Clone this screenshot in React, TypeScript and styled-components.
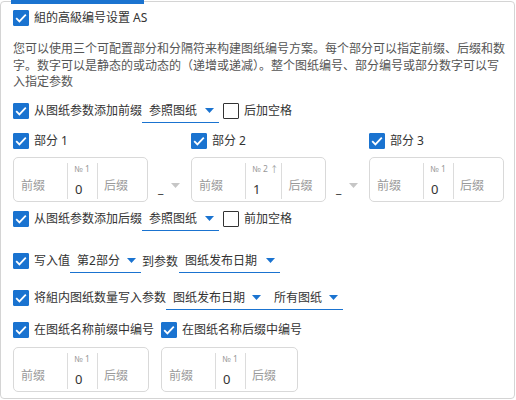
import React from "react";
import styled, { createGlobalStyle } from "styled-components";

const Global = createGlobalStyle`
  html, body { margin: 0; padding: 0; background: #fff; }
  body {
    font-family: "Noto Sans", "Noto Sans CJK SC", sans-serif;
    font-size: 12px;
    color: #333;
  }
  * { box-sizing: border-box; }
`;

const BLUE = "#1a73d0";

const Panel = styled.div`
  position: relative;
  width: 515px;
  height: 398px;
  margin-top: 1px;
  border: 1px solid #d4d4d4;
  border-radius: 4px;
  padding: 6px 11px 0 12px;
`;

const TabBar = styled.div`
  position: absolute;
  top: -2px;
  left: 10px;
  width: 133px;
  height: 4px;
  background: ${BLUE};
`;

const Row = styled.div<{ $mt: number; $h?: number }>`
  display: flex;
  align-items: center;
  height: ${(p) => p.$h ?? 24}px;
  margin-top: ${(p) => p.$mt}px;
  white-space: nowrap;
`;

const Box = styled.span<{ $on?: boolean }>`
  flex: none;
  width: 16px;
  height: 16px;
  border-radius: 1px;
  display: inline-flex;
  align-items: center;
  justify-content: center;
  background: ${(p) => (p.$on ? BLUE : "#fff")};
  border: 1px solid ${(p) => (p.$on ? BLUE : "#333")};
`;

const CheckLabel = styled.label`
  display: inline-flex;
  align-items: center;
  gap: 5px;
  color: #333;
  font-size: 12px;
  line-height: 16px;
`;

const Check = ({ on, children }: { on?: boolean; children: React.ReactNode }) => (
  <CheckLabel>
    <Box $on={on}>
      {on && (
        <svg width="14" height="14" viewBox="0 0 14 14">
          <path d="M2.2 7.2 L5.4 10.4 L11.8 3.6" fill="none" stroke="#fff" strokeWidth="1.8" />
        </svg>
      )}
    </Box>
    {children}
  </CheckLabel>
);

const Desc = styled.p`
  margin: 13px 0 0 0;
  color: #555;
  font-size: 12px;
  line-height: 16.5px;
  white-space: nowrap;
`;

const SelectBox = styled.div<{ $w: number; $pl?: number }>`
  display: inline-flex;
  align-items: center;
  justify-content: space-between;
  width: ${(p) => p.$w}px;
  height: 24px;
  padding: 0 5px 0 ${(p) => p.$pl ?? 7}px;
  border-bottom: 1px solid ${BLUE};
  color: #333;
`;

const Arrow = ({ color = BLUE }: { color?: string }) => (
  <svg width="9" height="5" viewBox="0 0 9 5">
    <path d="M0 0 H9 L4.5 5 Z" fill={color} />
  </svg>
);

const Select = ({ w, children, pl }: { w: number; children: React.ReactNode; pl?: number }) => (
  <SelectBox $w={w} $pl={pl}>
    <span>{children}</span>
    <Arrow />
  </SelectBox>
);

const Text = styled.span<{ $mx?: number }>`
  margin: 0 ${(p) => p.$mx ?? 0}px;
`;

const Parts = styled.div`
  display: grid;
  grid-template-columns: 135px 43px 135px 43px 135px;
  margin-top: 9px;
`;

const PartHead = styled.div`
  display: flex;
  align-items: center;
  height: 18px;
`;

const NumBox = styled.div<{ $w?: number }>`
  display: flex;
  width: ${(p) => p.$w ?? 135}px;
  height: 45px;
  border: 1px solid #d9d9d9;
  border-radius: 5px;
  margin-top: 7px;
`;

const Affix = styled.span<{ $w?: number; $pl: number }>`
  width: ${(p) => (p.$w ? `${p.$w}px` : "auto")};
  flex: ${(p) => (p.$w ? "none" : "1")};
  align-self: flex-end;
  padding: 0 0 7px ${(p) => p.$pl}px;
  color: #9a9a9a;
  font-size: 12px;
  line-height: 16px;
`;

const Divider = styled.span`
  width: 1px;
  margin: 5px 0 2px;
  background: #dcdcdc;
`;

const NumCell = styled.span`
  display: flex;
  flex-direction: column;
  min-width: 29px;
  padding: 5px 3px 0 6px;
`;

const NumLabel = styled.span`
  font-size: 8.5px;
  line-height: 11px;
  color: #999;
  white-space: nowrap;
`;

const NumValue = styled.span`
  margin-top: 7px;
  padding-left: 1px;
  font-size: 13px;
  line-height: 16px;
  color: #333;
`;

const Sep = styled.div`
  display: flex;
  align-items: flex-end;
  gap: 8px;
  padding: 0 0 6px 10px;
  margin-top: 25px;
  color: #333;
  font-size: 12px;
  line-height: 14px;
  svg { margin-bottom: 8px; }
`;

const Num = ({ label, value, w }: { label: string; value: string; w?: number }) => (
  <NumBox $w={w}>
    <Affix $w={53} $pl={7}>前缀</Affix>
    <Divider />
    <NumCell>
      <NumLabel>{label}</NumLabel>
      <NumValue>{value}</NumValue>
    </NumCell>
    <Divider />
    <Affix $pl={6}>后缀</Affix>
  </NumBox>
);

const Bottom = styled.div`
  display: flex;
  gap: 7px;
`;

const Col = styled.div``;

export default function App() {
  return (
    <>
      <Global />
      <Panel>
        <TabBar />
        <Row $mt={0} $h={20}>
          <Check on>組的高級编号设置 AS</Check>
        </Row>
        <Desc>
          您可以使用三个可配置部分和分隔符来构建图纸编号方案。每个部分可以指定前缀、后缀和数
          <br />
          字。数字可以是静态的或动态的（递增或递减）。整个图纸编号、部分编号或部分数字可以写
          <br />
          入指定参数
        </Desc>
        <Row $mt={8}>
          <Check on>从图纸参数添加前缀</Check>
          <Select w={77}>参照图纸</Select>
          <Text $mx={2} />
          <Check>后加空格</Check>
        </Row>
        <Parts>
          <Col>
            <PartHead><Check on>部分 1</Check></PartHead>
            <Num label="№ 1" value="0" />
          </Col>
          <Sep>
            <span>_</span>
            <Arrow color="#c6c6c6" />
          </Sep>
          <Col>
            <PartHead><Check on>部分 2</Check></PartHead>
            <Num label="№ 2 ↑" value="1" />
          </Col>
          <Sep>
            <span>_</span>
            <Arrow color="#c6c6c6" />
          </Sep>
          <Col>
            <PartHead><Check on>部分 3</Check></PartHead>
            <Num label="№ 1" value="0" />
          </Col>
        </Parts>
        <Row $mt={5}>
          <Check on>从图纸参数添加后缀</Check>
          <Select w={77}>参照图纸</Select>
          <Text $mx={2} />
          <Check>前加空格</Check>
        </Row>
        <Row $mt={18}>
          <Check on>写入值</Check>
          <Select w={71}>第2部分</Select>
          <Text $mx={1}>到参数</Text>
          <Select w={101} pl={6}>图纸发布日期</Select>
        </Row>
        <Row $mt={13}>
          <Check on>将組内图纸数量写入参数</Check>
          <Select w={100} pl={7}>图纸发布日期</Select>
          <Select w={77} pl={8}>所有图纸</Select>
        </Row>
        <Bottom>
          <Col>
            <Row $mt={10} $h={20}>
              <Check on>在图纸名称前缀中编号</Check>
            </Row>
            <Num label="№ 1" value="0" w={136} />
          </Col>
          <Col>
            <Row $mt={10} $h={20}>
              <Check on>在图纸名称后缀中编号</Check>
            </Row>
            <Num label="№ 1" value="0" w={137} />
          </Col>
        </Bottom>
      </Panel>
    </>
  );
}
